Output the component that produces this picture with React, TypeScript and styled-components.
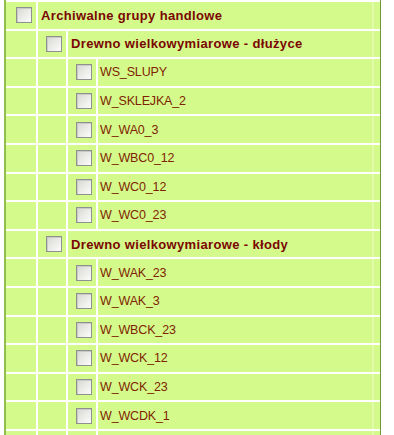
import React from "react";
import styled, { createGlobalStyle } from "styled-components";

const GlobalStyle = createGlobalStyle`
  body {
    margin: 0;
    background: #ffffff;
    font-family: "Liberation Sans", Arial, sans-serif;
  }
`;

type Node = { label: string; level: number; group?: boolean };

const items: Node[] = [
  { label: "Archiwalne grupy handlowe", level: 0, group: true },
  { label: "Drewno wielkowymiarowe - dłużyce", level: 1, group: true },
  { label: "WS_SLUPY", level: 2 },
  { label: "W_SKLEJKA_2", level: 2 },
  { label: "W_WA0_3", level: 2 },
  { label: "W_WBC0_12", level: 2 },
  { label: "W_WC0_12", level: 2 },
  { label: "W_WC0_23", level: 2 },
  { label: "Drewno wielkowymiarowe - kłody", level: 1, group: true },
  { label: "W_WAK_23", level: 2 },
  { label: "W_WAK_3", level: 2 },
  { label: "W_WBCK_23", level: 2 },
  { label: "W_WCK_12", level: 2 },
  { label: "W_WCK_23", level: 2 },
  { label: "W_WCDK_1", level: 2 },
  { label: "", level: 2 },
];

const widths = [30, 28, 28];

export default function App() {
  return (
    <>
      <GlobalStyle />
      <Tree>
        {items.map((item, i) => (
          <Row key={i}>
            {widths.slice(0, item.level).map((w, j) => (
              <Cell key={j} $width={w} />
            ))}
            <BoxCell $width={widths[item.level]}>
              <Check />
            </BoxCell>
            <Label $group={item.group}>{item.label}</Label>
            <Tail />
          </Row>
        ))}
      </Tree>
    </>
  );
}

const Tree = styled.div`
  margin-left: 4px;
  width: 374px;
  height: 435px;
  overflow: hidden;
  box-sizing: content-box;
  padding-top: 2px;
  border-left: 2px solid #8fbf4c;
  border-right: 1px solid #6f9a3a;
  display: flex;
  flex-direction: column;
  gap: 2px;
`;

const Row = styled.div`
  display: flex;
  gap: 2px;
  height: 26.6px;
  flex-shrink: 0;
  position: relative;
  &::after {
    content: "";
    position: absolute;
    right: 6px;
    top: 0;
    bottom: 0;
    width: 2px;
    background: #e2fbaa;
  }
`;

const Cell = styled.div<{ $width: number }>`
  width: ${(p) => p.$width}px;
  flex-shrink: 0;
  background: #d4fa8c;
`;

const BoxCell = styled(Cell)`
  display: flex;
  align-items: center;
  justify-content: flex-end;
  padding-right: 4px;
  box-sizing: border-box;
`;

const Check = styled.span`
  width: 14px;
  height: 14px;
  border: 1px solid #8e9192;
  background: linear-gradient(135deg, #d6d6d3 0%, #ecece9 55%, #fbfbfb 100%);
  box-shadow: inset 1px 1px 0 #c9c9c6;
`;

const Label = styled.div<{ $group?: boolean }>`
  flex: 1;
  background: #d4fa8c;
  display: flex;
  align-items: center;
  padding-left: ${(p) => (p.$group ? 3 : 2)}px;
  font-size: ${(p) => (p.$group ? 13 : 12.5)}px;
  letter-spacing: ${(p) => (p.$group ? 0.35 : -0.15)}px;
  font-weight: ${(p) => (p.$group ? "bold" : "normal")};
  color: ${(p) => (p.$group ? "#7a0600" : "#7f1f00")};
  white-space: nowrap;
`;

const Tail = styled.div`
  width: 6px;
  flex-shrink: 0;
  background: #d4fa8c;
`;
